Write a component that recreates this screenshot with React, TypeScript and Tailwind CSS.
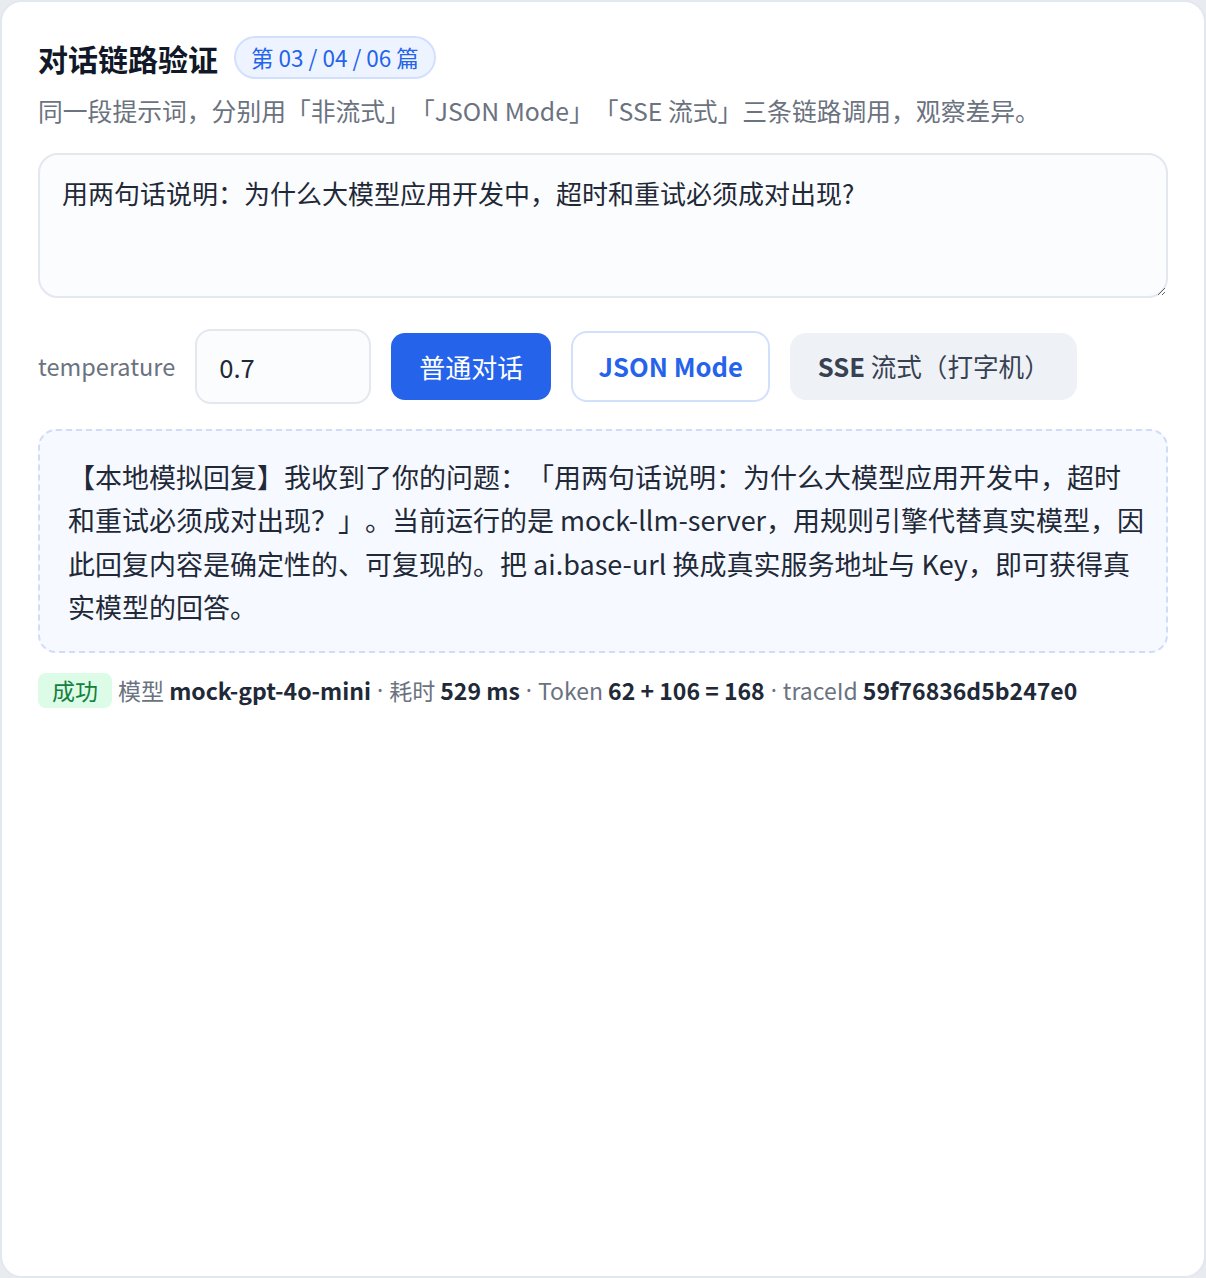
import { useState } from 'react';

const App = () => {
  const [prompt, setPrompt] = useState('用两句话说明：为什么大模型应用开发中，超时和重试必须成对出现?');
  const [temperature, setTemperature] = useState('0.7');

  return (
    <div className="min-h-[1278px] bg-[#e8ebf0] font-['Noto_Sans_CJK_SC','Noto_Sans',sans-serif] [text-spacing-trim:space-all] flex">
      <div className="flex-1 bg-white border-2 border-[#e3e7ee] rounded-[22px] px-[36px] pt-[34px] pb-10">
        {/* Header */}
        <div className="flex items-center gap-4">
          <h1 className="text-[30px] font-bold text-[#111827] leading-none">对话链路验证</h1>
          <span className="px-[15px] h-[43px] flex items-center rounded-full bg-[#eef4ff] border-2 border-[#d3e0fd] text-[#2563eb] text-[22.5px]">
            第 03 / 04 / 06 篇
          </span>
        </div>
        <p className="mt-[16px] text-[24.8px] text-[#6b7280] leading-tight">
          同一段提示词，分别用「非流式」「JSON Mode」「SSE 流式」三条链路调用，观察差异。
        </p>

        {/* Prompt */}
        <textarea
          value={prompt}
          onChange={e => setPrompt(e.target.value)}
          className="mt-[27px] block w-full h-[145px] rounded-[20px] border-2 border-[#e3e7ee] bg-[#fbfcfe] px-[22px] py-[18px] text-[26px] leading-[1.5] text-[#1f2937] outline-none resize-y"
        />

        {/* Controls */}
        <div className="mt-[31px] flex items-center gap-5">
          <span className="text-[23.5px] text-[#6b7280]">temperature</span>
          <input
            value={temperature}
            onChange={e => setTemperature(e.target.value)}
            className="w-[176px] h-[75px] rounded-[16px] border-2 border-[#e3e7ee] bg-[#fbfcfe] px-[22px] text-[25.6px] text-[#1f2937] outline-none"
          />
          <button className="w-[160px] h-[67px] rounded-[14px] bg-[#2563eb] text-white text-[26px]">
            普通对话
          </button>
          <button className="w-[199px] h-[71px] rounded-[16px] bg-white border-2 border-[#d3e0fd] text-[#2563eb] text-[25.6px] font-semibold">
            JSON Mode
          </button>
          <button className="w-[287px] h-[67px] rounded-[16px] bg-[#eef1f5] text-[#374151] text-[25.6px]">
            <span className="font-semibold">SSE</span> 流式（打字机）
          </button>
        </div>

        {/* Response */}
        <div className="mt-[25px] rounded-[18px] border-2 border-dashed border-[#d1dcf8] bg-[#f6f9ff] pl-[28px] pr-[20px] pt-[24px] pb-[22px] text-[27px] leading-[43.5px] text-[#1f2937]">
          【本地模拟回复】我收到了你的问题：「用两句话说明：为什么大模型应用开发中，超时和重试必须成对出现？」。当前运行的是 mock-llm-server，用规则引擎代替真实模型，因此回复内容是确定性的、可复现的。把 ai.base-url 换成真实服务地址与 Key，即可获得真实模型的回答。
        </div>

        {/* Meta */}
        <div className="mt-[20px] flex items-center text-[23px] text-[#6b7280] leading-none whitespace-nowrap">
          <span className="px-[14px] h-[35px] flex items-center rounded-[8px] bg-[#dcfce7] text-[#15803d] mr-[6px]">成功</span>
          <span>模型&nbsp;</span>
          <span className="font-semibold text-[#1f2937]">mock-gpt-4o-mini</span>
          <span className="font-['Noto_Sans',sans-serif]">&nbsp;·&nbsp;</span>
          <span>耗时&nbsp;</span>
          <span className="font-semibold text-[#1f2937]">529 ms</span>
          <span className="font-['Noto_Sans',sans-serif]">&nbsp;·&nbsp;</span>
          <span>Token&nbsp;</span>
          <span className="font-semibold text-[#1f2937]">62 + 106 = 168</span>
          <span className="font-['Noto_Sans',sans-serif]">&nbsp;·&nbsp;</span>
          <span>traceId&nbsp;</span>
          <span className="font-semibold text-[#1f2937]">59f76836d5b247e0</span>
        </div>
      </div>
    </div>
  );
};

export default App;
